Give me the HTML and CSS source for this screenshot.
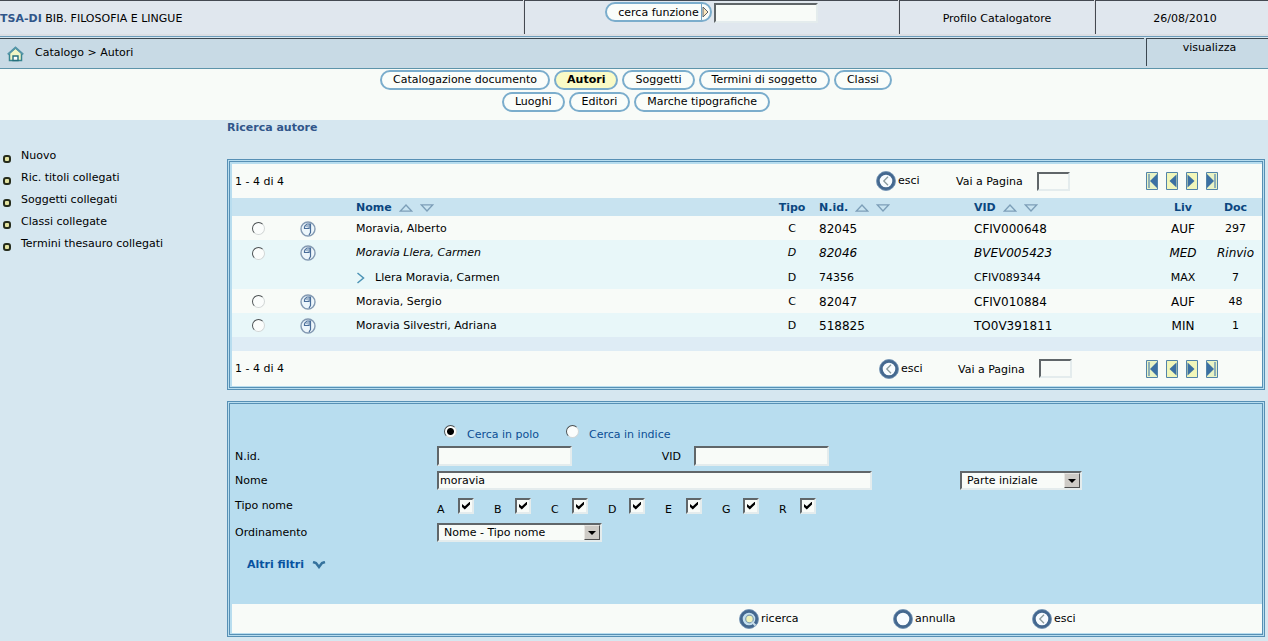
FILE: index.html
```html
<!DOCTYPE html>
<html lang="it">
<head>
<meta charset="utf-8">
<title>Catalogo - Autori</title>
<link rel="stylesheet" href="styles.css">
</head>
<body>
<svg class="defs" aria-hidden="true">
  <symbol id="i-up" viewBox="0 0 14 8"><path d="M1.2 7.2 7 1l5.800 6.200z" fill="none" stroke="#7d9fb8" stroke-width="1.300"/></symbol>
  <symbol id="i-down" viewBox="0 0 14 8"><path d="M1.200 .8 7 7l5.800-6.200z" fill="none" stroke="#7d9fb8" stroke-width="1.300"/></symbol>
  <symbol id="i-back" viewBox="0 0 20 20"><circle cx="10" cy="10" r="8" fill="#f8fcff" stroke="#44688f" stroke-width="3.400"/><circle cx="10" cy="10" r="9.500" fill="none" stroke="#7f9fbe" stroke-width=".7"/><path d="M12 5.800 7.800 10l4.200 4.200" fill="none" stroke="#8a9a9c" stroke-width="1.300"/></symbol>
  <symbol id="i-ring" viewBox="0 0 20 20"><circle cx="10" cy="10" r="8" fill="#f8fcff" stroke="#44688f" stroke-width="3.400"/><circle cx="10" cy="10" r="9.500" fill="none" stroke="#7f9fbe" stroke-width=".7"/></symbol>
  <symbol id="i-search" viewBox="0 0 20 20"><circle cx="10" cy="10" r="8" fill="#c4e0f0" stroke="#44688f" stroke-width="3.400"/><circle cx="10" cy="10" r="9.500" fill="none" stroke="#7f9fbe" stroke-width=".7"/><circle cx="10.500" cy="10" r="3.800" fill="#eff2b8" stroke="#7f9cae" stroke-width="1.200"/><path d="m13 13 3.500 3.500" stroke="#c8dce8" stroke-width="2"/></symbol>
  <symbol id="i-doc" viewBox="0 0 16 16"><circle cx="8" cy="8" r="7" fill="#edf6fb" stroke="#8399b2" stroke-width="1.400"/><path d="M4.500 5.500 7 3h3.500v8.500L9 14M4.500 5.500v2h4.500V3" fill="none" stroke="#496d99" stroke-width="1.200"/><path d="M5 5.500 7 3.500h2V7z" fill="#a3b8ce"/></symbol>
  <symbol id="i-first" viewBox="0 0 12 18"><path d="M.5.500h11v17H.5z" fill="#e9f3c4" stroke="#5284a8"/><path d="M2 2h2v14H2z" fill="#8eb0b8"/><path d="M11 2v14L4 9z" fill="#3c70a2"/></symbol>
  <symbol id="i-prev" viewBox="0 0 12 18"><path d="M.5.500h11v17H.5z" fill="#f1f6ba" stroke="#5284a8"/><path d="M10.500 2.500v13L3.500 9z" fill="#3c70a2"/></symbol>
  <symbol id="i-next" viewBox="0 0 12 18"><path d="M.5.500h11v17H.5z" fill="#f1f6ba" stroke="#5284a8"/><path d="M1.500 2.500v13L8.500 9z" fill="#3c70a2"/></symbol>
  <symbol id="i-last" viewBox="0 0 12 18"><path d="M.5.500h11v17H.5z" fill="#e9f3c4" stroke="#5284a8"/><path d="M8 2h2v14H8z" fill="#8eb0b8"/><path d="M1 2v14l7-7z" fill="#3c70a2"/></symbol>
</svg>

<header class="top">
  <div class="cell place"><strong>TSA-DI</strong>&nbsp;BIB. FILOSOFIA E LINGUE</div>
  <form class="cell quick">
    <button type="button" class="pill">cerca funzione<svg viewBox="0 0 9 16" width="9" height="16"><path d="M.5 0v16" stroke="#72a4c4"/><path d="M2 3v10l5-5z" fill="#fbe6bd" stroke="#5b6268"/></svg></button>
    <input type="text" class="box" aria-label="cerca funzione">
  </form>
  <div class="cell mid">Profilo Catalogatore</div>
  <div class="cell mid date">26/08/2010</div>
</header>

<div class="crumbs">
  <nav class="path">
    <a href="#" aria-label="Home"><svg viewBox="0 0 17 16" width="17" height="16"><path d="M2.500 7v7.500h12V7L8.500 2z" fill="#f2f6c4" stroke="#388590" stroke-width="1.500"/><path d="M.8 8.500 8.500 1.500l7.700 7" fill="none" stroke="#5696a8" stroke-width="2"/><path d="M6 14.500V10h5v4.500z" fill="#fff" stroke="#26707c" stroke-width="1.400"/></svg></a>
    <span>Catalogo &gt; Autori</span>
  </nav>
  <a href="#" class="view">visualizza</a>
</div>

<nav class="tabs">
  <div class="tabrow">
    <a href="#" class="pill">Catalogazione documento</a>
    <a href="#" class="pill on">Autori</a>
    <a href="#" class="pill">Soggetti</a>
    <a href="#" class="pill">Termini di soggetto</a>
    <a href="#" class="pill">Classi</a>
  </div>
  <div class="tabrow">
    <a href="#" class="pill">Luoghi</a>
    <a href="#" class="pill">Editori</a>
    <a href="#" class="pill">Marche tipografiche</a>
  </div>
</nav>

<div class="page">
  <ul class="side">
    <li><a href="#">Nuovo</a></li>
    <li><a href="#">Ric. titoli collegati</a></li>
    <li><a href="#">Soggetti collegati</a></li>
    <li><a href="#">Classi collegate</a></li>
    <li><a href="#">Termini thesauro collegati</a></li>
  </ul>

  <main class="main">
    <h1>Ricerca autore</h1>

    <section class="panel">
      <div class="bar">
        <span class="count">1 - 4 di 4</span>
        <button type="button" class="act"><svg width="20" height="20"><use href="#i-back"/></svg>esci</button>
        <div class="goto"><label for="pag1">Vai a Pagina</label><input id="pag1" type="text" class="box"></div>
        <div class="pager">
          <button type="button" aria-label="Prima"><svg width="12" height="18"><use href="#i-first"/></svg></button>
          <button type="button" aria-label="Precedente"><svg width="12" height="18"><use href="#i-prev"/></svg></button>
          <button type="button" aria-label="Successiva"><svg width="12" height="18"><use href="#i-next"/></svg></button>
          <button type="button" aria-label="Ultima"><svg width="12" height="18"><use href="#i-last"/></svg></button>
        </div>
      </div>

      <table class="list">
        <colgroup><col class="c-pick"><col class="c-doc"><col><col class="c-tipo"><col class="c-nid"><col class="c-vid"><col class="c-liv"><col class="c-num"></colgroup>
        <thead>
          <tr>
            <th></th><th></th>
            <th class="name"><span class="sort">Nome <svg><use href="#i-up"/></svg><svg><use href="#i-down"/></svg></span></th>
            <th class="c">Tipo</th>
            <th class="code"><span class="sort">N.id. <svg><use href="#i-up"/></svg><svg><use href="#i-down"/></svg></span></th>
            <th class="code"><span class="sort">VID <svg><use href="#i-up"/></svg><svg><use href="#i-down"/></svg></span></th>
            <th class="c">Liv</th><th class="c">Doc</th>
          </tr>
        </thead>
        <tbody>
          <tr>
            <td class="c"><input type="radio" name="sel" aria-label="Moravia, Alberto"></td>
            <td class="c"><svg width="16" height="16"><use href="#i-doc"/></svg></td>
            <td class="name">Moravia, Alberto</td><td class="c">C</td><td class="code big">82045</td><td class="code big">CFIV000648</td><td class="c big">AUF</td><td class="c">297</td>
          </tr>
          <tr class="alt see">
            <td class="c"><input type="radio" name="sel" aria-label="Moravia Llera, Carmen"></td>
            <td class="c"><svg width="16" height="16"><use href="#i-doc"/></svg></td>
            <td class="name">Moravia Llera, Carmen</td><td class="c">D</td><td class="code big">82046</td><td class="code big">BVEV005423</td><td class="c big">MED</td><td class="c big">Rinvio</td>
          </tr>
          <tr class="alt">
            <td></td><td></td>
            <td class="name"><span class="child"><svg viewBox="0 0 9 12" width="9" height="12"><path d="m1.500 1 6 5-6 5" fill="none" stroke="#4b93b5" stroke-width="1.500"/></svg>Llera Moravia, Carmen</span></td><td class="c">D</td><td class="code">74356</td><td class="code">CFIV089344</td><td class="c">MAX</td><td class="c">7</td>
          </tr>
          <tr>
            <td class="c"><input type="radio" name="sel" aria-label="Moravia, Sergio"></td>
            <td class="c"><svg width="16" height="16"><use href="#i-doc"/></svg></td>
            <td class="name">Moravia, Sergio</td><td class="c">C</td><td class="code big">82047</td><td class="code big">CFIV010884</td><td class="c big">AUF</td><td class="c">48</td>
          </tr>
          <tr class="alt">
            <td class="c"><input type="radio" name="sel" aria-label="Moravia Silvestri, Adriana"></td>
            <td class="c"><svg width="16" height="16"><use href="#i-doc"/></svg></td>
            <td class="name">Moravia Silvestri, Adriana</td><td class="c">D</td><td class="code big">518825</td><td class="code big">TO0V391811</td><td class="c big">MIN</td><td class="c">1</td>
          </tr>
        </tbody>
      </table>
      <div class="strip"></div>

      <div class="bar foot">
        <span class="count">1 - 4 di 4</span>
        <button type="button" class="act"><svg width="20" height="20"><use href="#i-back"/></svg>esci</button>
        <div class="goto"><label for="pag2">Vai a Pagina</label><input id="pag2" type="text" class="box"></div>
        <div class="pager">
          <button type="button" aria-label="Prima"><svg width="12" height="18"><use href="#i-first"/></svg></button>
          <button type="button" aria-label="Precedente"><svg width="12" height="18"><use href="#i-prev"/></svg></button>
          <button type="button" aria-label="Successiva"><svg width="12" height="18"><use href="#i-next"/></svg></button>
          <button type="button" aria-label="Ultima"><svg width="12" height="18"><use href="#i-last"/></svg></button>
        </div>
      </div>
    </section>

    <form class="panel">
      <div class="fields">
        <div class="where">
          <input type="radio" name="dove" id="polo" checked><label for="polo">Cerca in polo</label>
          <input type="radio" name="dove" id="indice"><label for="indice">Cerca in indice</label>
        </div>
        <div class="row">
          <label class="lab" for="nid">N.id.</label>
          <input id="nid" type="text" class="box short">
          <label class="vid" for="vid">VID</label>
          <input id="vid" type="text" class="box short">
        </div>
        <div class="row">
          <label class="lab" for="nome">Nome</label>
          <input id="nome" type="text" class="box long" value="moravia">
          <span class="pick part"><select aria-label="Tipo di ricerca"><option>Parte iniziale</option></select></span>
        </div>
        <div class="row">
          <span class="lab">Tipo nome</span>
          <div class="kinds">
            <label><span>A</span><input type="checkbox" checked></label>
            <label><span>B</span><input type="checkbox" checked></label>
            <label><span>C</span><input type="checkbox" checked></label>
            <label><span>D</span><input type="checkbox" checked></label>
            <label><span>E</span><input type="checkbox" checked></label>
            <label><span>G</span><input type="checkbox" checked></label>
            <label><span>R</span><input type="checkbox" checked></label>
          </div>
        </div>
        <div class="row">
          <label class="lab" for="ord">Ordinamento</label>
          <span class="pick order"><select id="ord"><option>Nome - Tipo nome</option></select></span>
        </div>
        <a href="#" class="more">Altri filtri <svg viewBox="0 0 14 8" width="14" height="8"><path d="m1 1 3 1 3 4 3-4 3-1" fill="none" stroke="#35729d" stroke-width="2.500"/></svg></a>
      </div>
      <div class="actions">
        <button type="button" class="act"><svg width="20" height="20"><use href="#i-search"/></svg>ricerca</button>
        <button type="reset" class="act"><svg width="20" height="20"><use href="#i-ring"/></svg>annulla</button>
        <button type="button" class="act"><svg width="20" height="20"><use href="#i-back"/></svg>esci</button>
      </div>
    </form>
  </main>
</div>
</body>
</html>
```
FILE: styles.css
```css
*, ::before, ::after { box-sizing: border-box; }
body {
  margin: 0;
  background: #d6e7f0;
  color: #000;
  font: 11px/16px "DejaVu Sans", Verdana, sans-serif;
}
a { color: inherit; text-decoration: none; }
button, input, select { font: inherit; color: inherit; margin: 0; }
button { background: none; border: 0; padding: 0; }
svg { display: block; flex: none; }
.defs { position: absolute; width: 0; height: 0; }

/* header */
.top {
  display: grid;
  grid-template-columns: 523fr 374fr 195fr 173fr;
  column-gap: 1px;
  height: 37px;
  padding-bottom: 2px;
  background: #dcdfe4;
  border-bottom: 1px solid #6c9cba;
}
.cell {
  height: 34px;
  border-top: 1px solid #444951;
  border-left: 1px solid #444951;
  background: #e0e7ee;
  line-height: 35px;
  white-space: nowrap;
}
.place { border-left: 0; }
.place strong { color: #31568a; }
.mid { text-align: center; }
.date { padding-left: 6px; }
.quick { display: flex; justify-content: center; align-items: flex-start; gap: 2px; padding-top: 1px; }
.quick .pill { gap: 2px; padding: 0 0 0 11px; }
.quick .box { width: 104px; height: 20px; margin-top: 1px; }

.crumbs {
  display: grid;
  grid-template-columns: 1144fr 122fr;
  column-gap: 2px;
  height: 31px;
  margin-top: 1px;
  padding-bottom: 2px;
  background: #c8dae5;
  border-bottom: 1px solid #5e94aa;
}
.path { display: flex; align-items: center; gap: 11px; padding: 0 0 0 7px; border-top: 1px solid #3b4750; }
.path svg { margin-top: 3px; }
.view { padding: 1px 0 0 4px; border-top: 1px solid #3b4750; border-left: 1px solid #3b4750; text-align: center; }

/* tabs */
.tabs { display: flex; flex-direction: column; gap: 2px; height: 51px; padding-top: 1px; background: #f8fbf8; }
.tabrow { display: flex; justify-content: center; gap: 4px; padding-left: 4px; }
.pill {
  display: inline-flex;
  align-items: center;
  height: 20px;
  padding: 0 11px;
  border: 2px solid #7badcc;
  border-radius: 10px;
  background: #fafdfa;
  white-space: nowrap;
}
.pill.on { background: #fafbc6; font-weight: bold; }

/* page */
.page { display: flex; }
.side { flex: 0 0 227px; margin: 0; padding: 25px 0 0; list-style: none; }
.side li { display: flex; align-items: center; gap: 10px; height: 22px; padding-left: 3px; }
.side li::before {
  content: "";
  width: 8px;
  height: 8px;
  margin-top: 5px;
  border: 2px solid #262c1c;
  border-radius: 3px;
  background: #e3e3a0;
}
.main { flex: 1; min-width: 0; padding-right: 3px; }
h1 { margin: 0 0 24px; font-size: 11px; line-height: 15px; color: #31568a; }
.panel {
  margin: 0 0 11px;
  padding: 2px 0 1px 2px;
  border: 3px double #5790b5;
  background: #b8ddef;
}

.bar {
  display: grid;
  grid-template-columns: 1fr 80px 190px 116px;
  align-items: center;
  height: 34px;
  background: #f8fbf8;
}
.foot { grid-template-columns: 1fr 79px 188px 116px; height: 35px; }
.count { padding: 1px 0 0 3px; }
.act { display: inline-flex; align-items: center; gap: 2px; }
.goto { display: flex; align-items: center; gap: 14px; }
.goto label { padding-top: 2px; }
.goto .box { width: 33px; height: 19px; }
.pager { display: flex; gap: 8px; }

.box {
  padding: 0 1px;
  border: 2px solid;
  border-color: #606669 #e4eced #e4eced #606669;
  border-radius: 0;
  background: #f8fbf8;
  outline: 0;
}

/* result list */
.list { width: 100%; table-layout: fixed; border-collapse: collapse; background: #f8fbf8; }
.c-pick { width: 52px; }
.c-doc { width: 48px; }
.c-tipo { width: 40px; }
.c-nid { width: 155px; }
.c-vid { width: 190px; }
.c-liv { width: 52px; }
.c-num { width: 53px; }
th { height: 18px; padding: 1px 0 0; background: #c8e3f0; color: #0b467f; text-align: left; }
td { height: 24px; padding: 1px 0 0; white-space: nowrap; }
.c { text-align: center; }
.c svg { margin: 0 auto; }
.name { padding-left: 24px; }
.code { padding-left: 7px; }
.big { font-size: 12px; }
.alt { background: #e8f7f9; }
.see td { font-style: italic; height: 25px; }
.sort { display: flex; align-items: center; gap: 7px; }
.sort svg { width: 14px; height: 8px; }
.child { display: flex; align-items: center; gap: 10px; }
.strip { height: 14px; background: #deecf5; }

input[type="radio"] {
  appearance: none;
  width: 13px;
  height: 13px;
  border: 1px solid;
  border-color: #4b5052 #d2d6d6 #d2d6d6 #4b5052;
  border-radius: 50%;
  background: #fbfdfc;
  vertical-align: middle;
}
input[type="radio"]:checked { background: radial-gradient(circle, #000 0 3px, #fbfdfc 4px); }

/* search form */
.fields { padding: 12px 3px 31px; }
.where { display: flex; align-items: center; gap: 10px; height: 26px; padding-left: 209px; color: #0b4e94; }
.where label { padding-top: 8px; }
.where label + input { margin-left: 17px; }
.row { display: flex; align-items: center; height: 26px; }
.where + .row, .where + .row + .row { height: 24px; }
.where + .row + .row + .row { height: 27px; }
.lab { width: 202px; padding-top: 1px; }
.short { width: 135px; height: 20px; }
.long { width: 435px; height: 19px; }
.vid { width: 122px; padding: 1px 13px 0 0; text-align: right; }
.pick { position: relative; height: 19px; }
.pick select {
  appearance: none;
  width: 100%;
  height: 100%;
  padding: 0 18px 0 5px;
  border: 2px solid;
  border-color: #606669 #e4eced #e4eced #606669;
  border-radius: 0;
  background: #f8fbf8;
}
.pick::before {
  content: "";
  position: absolute;
  inset: 2px 2px 2px auto;
  width: 16px;
  border: 1px solid;
  border-color: #e8e6e2 #505050 #505050 #e8e6e2;
  background: #cecbc6;
  pointer-events: none;
}
.pick::after {
  content: "";
  position: absolute;
  right: 6px;
  top: 8px;
  border: 4px solid transparent;
  border-top-color: #000;
  border-bottom: 0;
  pointer-events: none;
}
.part { width: 122px; margin-left: 88px; }
.order { width: 165px; }
.kinds { display: flex; }
.kinds label { display: flex; align-items: center; width: 57px; }
.kinds span { width: 21px; padding-top: 8px; }
input[type="checkbox"] {
  appearance: none;
  width: 16px;
  height: 16px;
  border: 2px solid;
  border-color: #606669 #e4eced #e4eced #606669;
  background: #f8fbf8;
}
input[type="checkbox"]:checked::before {
  content: "";
  display: block;
  width: 8px;
  height: 8px;
  margin: 2px;
  background: #000;
  clip-path: polygon(0 30%, 35% 60%, 100% 0, 100% 38%, 35% 100%, 0 68%);
}
.more { display: flex; width: max-content; align-items: center; gap: 8px; margin-top: 12px; padding-left: 12px; color: #0852a0; font-weight: bold; }
.actions {
  display: grid;
  grid-template-columns: 154px 139px 50px;
  justify-content: end;
  align-items: center;
  height: 29px;
  padding-right: 180px;
  background: #f8fbf8;
}
.actions .act { justify-self: start; }
```
